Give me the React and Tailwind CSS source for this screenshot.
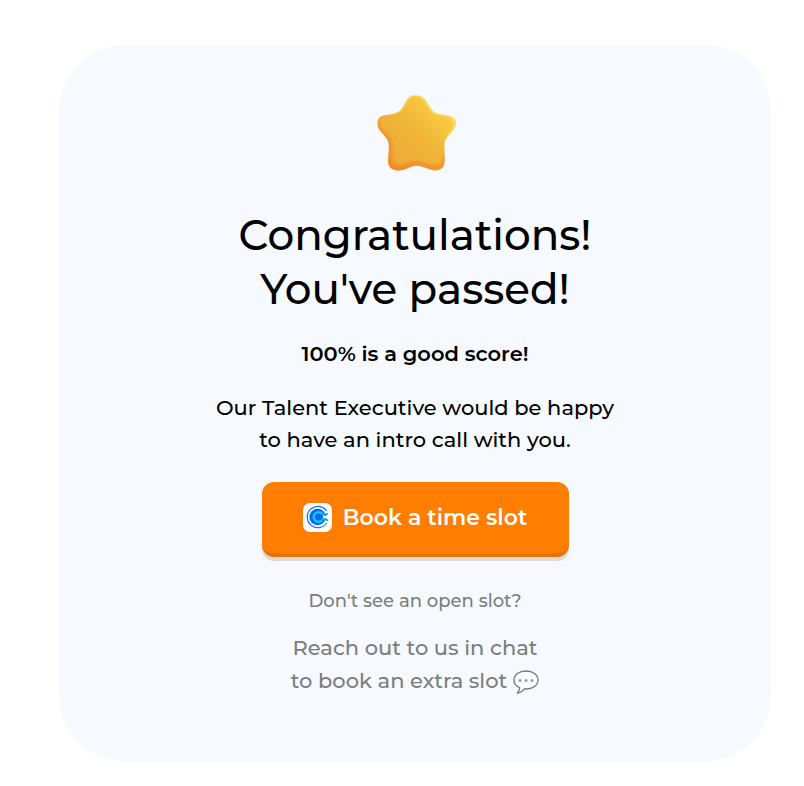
function Star() {
  return (
    <svg className="h-[77px] w-[84px]" viewBox="27 32 246 231" preserveAspectRatio="xMaxYMid meet" role="img" aria-label="Star">
      <defs>
        <linearGradient id="rim" x1="0.2" y1="1" x2="0.8" y2="0">
          <stop offset="0" stopColor="#f28a2c" />
          <stop offset="0.35" stopColor="#f29a2e" />
          <stop offset="0.7" stopColor="#fad04a" />
          <stop offset="1" stopColor="#fff0a0" />
        </linearGradient>
        <linearGradient id="face" x1="0.1" y1="0.9" x2="0.9" y2="0.1">
          <stop offset="0" stopColor="#ecab38" />
          <stop offset="0.5" stopColor="#f0b639" />
          <stop offset="1" stopColor="#fad244" />
        </linearGradient>
        <filter id="soften" x="-10%" y="-10%" width="120%" height="120%">
          <feGaussianBlur stdDeviation="3" />
        </filter>
      </defs>
      <path
        fill="url(#rim)"
        d="M128 40C138 31 165 31 175 42C187 56 193 77 207 85C223 93 244 88 261 98C272 105 273 118 267 129C258 145 240 157 236 175C232 199 241 226 233 246C227 257 212 261 198 257C181 252 168 244 151 244C134 244 121 257 99 259C83 259 70 253 67 240C64 218 71 194 67 174C62 155 44 147 37 131C31 115 34 100 47 95C63 90 82 92 98 82C113 72 116 52 128 40Z"
      />
      <path
        fill="url(#face)"
        filter="url(#soften)"
        d="M131 40C141 32 161 32 170 42C183 57 189 80 204 88C221 96 242 92 254 100C264 108 262 122 254 134C244 148 232 157 229 176C226 198 233 217 225 232C219 241 206 242 195 240C180 236 168 229 151 229C132 229 119 239 103 241C90 242 82 237 80 227C77 208 83 191 79 172C74 154 55 145 47 129C40 115 42 103 53 98C68 92 86 96 102 86C118 76 119 52 131 40Z"
      />
    </svg>
  );
}

function CalendarLogo() {
  return (
    <svg className="size-[29px] shrink-0" viewBox="0 0 29 29" fill="none" aria-hidden="true">
      <rect width="29" height="29" rx="7" fill="#fff" />
      <path d="M23.6 8A10.6 10.6 0 1 0 23.6 20" stroke="#2477f2" strokeWidth="1.3" />
      <circle cx="14.6" cy="14" r="8.3" fill="#0969f5" />
      <path d="M20 12.6h6v2.8h-6z" fill="#fff" />
      <path d="M19.4 10.9C18.2 9.5 17 9.3 15.4 9.3a4.7 4.7 0 0 0 0 9.4c1.6 0 2.8-.2 4-1.6" stroke="#12c9ef" strokeWidth="2.4" />
      <path d="M19 11.2c2 1.2 4.4.8 5.6-1M19 16.8c2-1.2 4.4-.8 5.6 1" stroke="#1293f5" strokeWidth="1.8" />
      <path d="M19 12.4h3M19 15.6h3" stroke="#12d3ef" strokeWidth="1.4" />
    </svg>
  );
}

function SpeechBubble() {
  return (
    <svg className="ml-1.5 inline-block h-[25px] w-[26px] align-middle" viewBox="0 0 26 25" fill="none" role="img" aria-label="Speech bubble">
      <path
        d="M13 1C6.2 1 1 4.8 1 10c0 3.4 2.2 6.2 5.7 7.8-.1 2-.9 3.8-2.5 5.3 3.1-.4 5.5-1.8 7.1-4.2l1.7.1c6.8 0 12-3.8 12-9S19.8 1 13 1Z"
        fill="#fafcff"
        stroke="#777"
        strokeWidth="1.3"
        strokeLinejoin="round"
      />
      <g fill="#919ba5">
        <circle cx="7" cy="10.5" r="1.5" />
        <circle cx="13" cy="10.5" r="1.5" />
        <circle cx="19" cy="10.5" r="1.5" />
      </g>
    </svg>
  );
}

export default function App() {
  return (
    <div className="bg-white pt-[45px] pr-[33px] pb-[26px] pl-[59px] font-['Montserrat','Inter',sans-serif] font-medium text-black">
      <main className="flex flex-col items-center rounded-[66px] bg-[#f6faff] px-6 pt-[50px] pb-16 text-center">
        <Star />
        <h1 className="mt-9 text-[42px] leading-[54px] font-medium">
          Congratulations!
          <br />
          You've passed!
        </h1>
        <p className="mt-[22px] text-[21px] leading-8 font-semibold">100% is a good score!</p>
        <p className="mt-[22px] text-[21px] leading-8">
          Our Talent Executive would be happy
          <br />
          to have an intro call with you.
        </p>
        <button
          type="button"
          className="mt-[26px] flex h-[75px] w-[307px] max-w-full cursor-pointer items-center justify-center gap-[11px] rounded-xl border-b-4 border-[#e67300] bg-[#ff7d00] text-[22px] leading-8 font-semibold text-white shadow-[0_4px_0_#e4d9d2]"
        >
          <CalendarLogo />
          Book a time slot
        </button>
        <p className="mt-8 text-[18px] leading-6 text-[#7b7d80]">Don't see an open slot?</p>
        <p className="mt-[18px] text-[21px] leading-[33px] text-[#7b7d80]">
          Reach out to us in chat
          <br />
          to book an extra slot
          <SpeechBubble />
        </p>
      </main>
    </div>
  );
}
